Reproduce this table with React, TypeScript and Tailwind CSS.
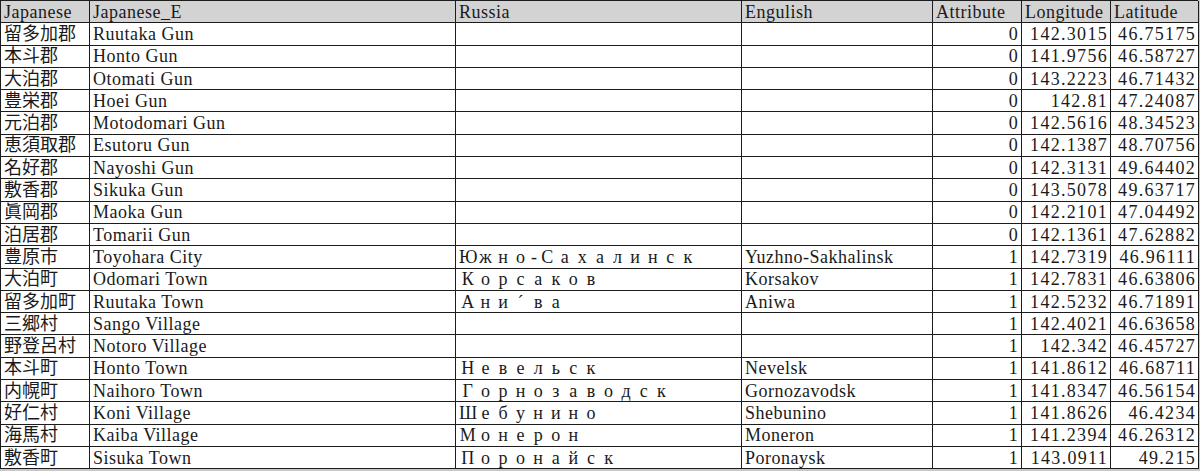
import React from "react";

type Row = [string, string, string, string, string, string, string];

const header: Row = ["Japanese", "Japanese_E", "Russia", "Engulish", "Attribute", "Longitude", "Latitude"];

const rows: Row[] = [
  ["留多加郡", "Ruutaka Gun", "", "", "0", "142.3015", "46.75175"],
  ["本斗郡", "Honto Gun", "", "", "0", "141.9756", "46.58727"],
  ["大泊郡", "Otomati Gun", "", "", "0", "143.2223", "46.71432"],
  ["豊栄郡", "Hoei Gun", "", "", "0", "142.81", "47.24087"],
  ["元泊郡", "Motodomari Gun", "", "", "0", "142.5616", "48.34523"],
  ["恵須取郡", "Esutoru Gun", "", "", "0", "142.1387", "48.70756"],
  ["名好郡", "Nayoshi Gun", "", "", "0", "142.3131", "49.64402"],
  ["敷香郡", "Sikuka Gun", "", "", "0", "143.5078", "49.63717"],
  ["眞岡郡", "Maoka Gun", "", "", "0", "142.2101", "47.04492"],
  ["泊居郡", "Tomarii Gun", "", "", "0", "142.1361", "47.62882"],
  ["豊原市", "Toyohara City", "Южно-Сахалинск", "Yuzhno-Sakhalinsk", "1", "142.7319", "46.96111"],
  ["大泊町", "Odomari Town", "Корсаков", "Korsakov", "1", "142.7831", "46.63806"],
  ["留多加町", "Ruutaka Town", "Ани´ва", "Aniwa", "1", "142.5232", "46.71891"],
  ["三郷村", "Sango Village", "", "", "1", "142.4021", "46.63658"],
  ["野登呂村", "Notoro Village", "", "", "1", "142.342", "46.45727"],
  ["本斗町", "Honto Town", "Невельск", "Nevelsk", "1", "141.8612", "46.68711"],
  ["内幌町", "Naihoro Town", "Горнозаводск", "Gornozavodsk", "1", "141.8347", "46.56154"],
  ["好仁村", "Koni Village", "Шебунино", "Shebunino", "1", "141.8626", "46.4234"],
  ["海馬村", "Kaiba Village", "Монерон", "Moneron", "1", "141.2394", "46.26312"],
  ["敷香町", "Sisuka Town", "Поронайск", "Poronaysk", "1", "143.0911", "49.215"],
];

// Cyrillic drawn full-width, like a Mincho spreadsheet font
function WideText({ text }: { text: string }) {
  return (
    <span className="inline-flex">
      {Array.from(text).map((ch, i) =>
        ch === "-" ? (
          <span key={i} className="inline-block w-[9px] text-center">-</span>
        ) : (
          <span key={i} className="inline-block w-[17.6px] text-center">{ch}</span>
        )
      )}
    </span>
  );
}

function Cell({ value, col, head }: { value: string; col: number; head?: boolean }) {
  const numeric = !head && col >= 4;
  let spacing = "tracking-[0.5px] ";
  if (numeric) spacing = "tracking-[1.3px] pr-[2px] ";
  if (!head && (col === 0 || col === 2)) spacing = "";
  return (
    <div
      className={
        "flex items-center overflow-hidden whitespace-nowrap border-r border-b border-[#1c1c1c] px-[3px] " +
        spacing +
        (head ? "bg-[#d3d3d3] " : "bg-white ") +
        (numeric ? "justify-end" : "justify-start")
      }
    >
      {!head && col === 2 && value ? <WideText text={value} /> : value}
    </div>
  );
}

export default function App() {
  return (
    <div className="h-[471px] w-[1200px] bg-[#c8c8c8]">
      <div
        className="grid w-[1198px] grid-cols-[89px_366px_286px_191px_89px_89px_88px] auto-rows-[22.3px] border-l border-t border-[#1c1c1c] text-[18px] leading-none text-[#1a1a1a]"
        style={{ fontFamily: '"Liberation Serif", "Noto Sans CJK JP", serif' }}
      >
        {header.map((h, i) => (
          <Cell key={"h" + i} value={h} col={i} head />
        ))}
        {rows.map((r, ri) =>
          r.map((v, ci) => <Cell key={ri + "-" + ci} value={v} col={ci} />)
        )}
      </div>
    </div>
  );
}
